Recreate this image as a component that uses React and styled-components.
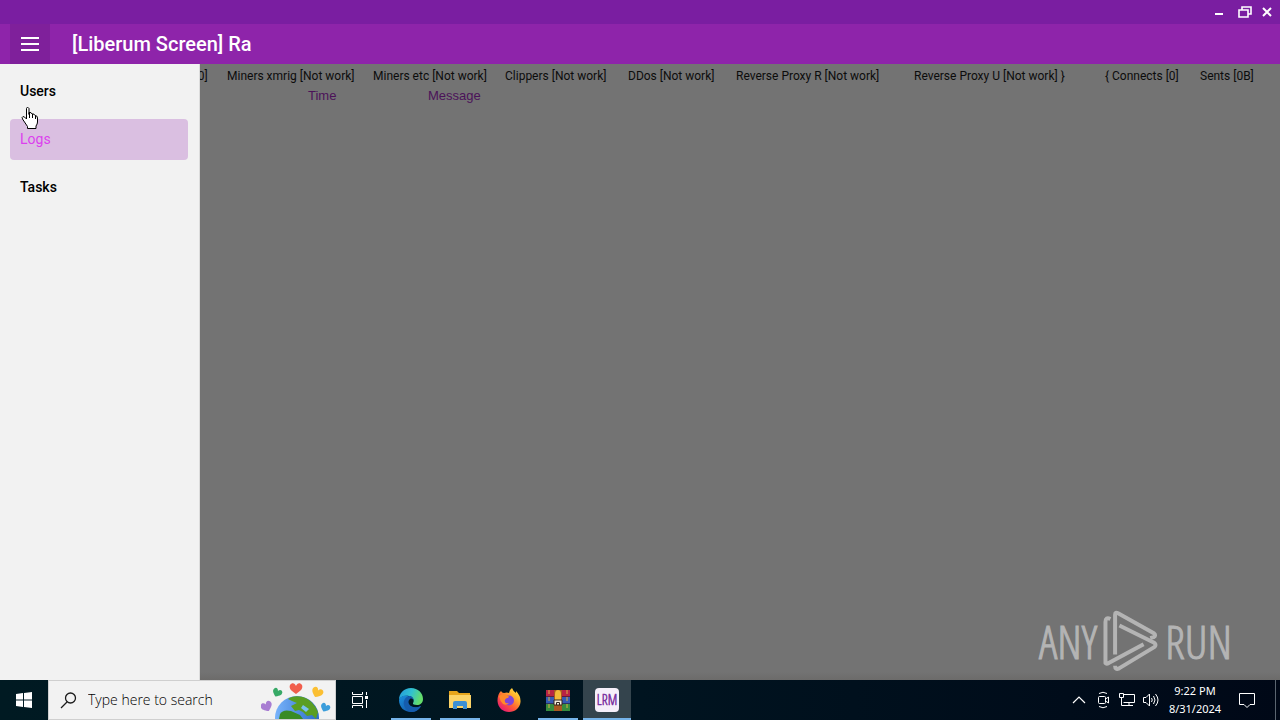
import React from 'react';
import styled, { createGlobalStyle } from 'styled-components';

const GlobalStyle = createGlobalStyle`
    * {
        box-sizing: border-box;
    }

    body {
        margin: 0;
        overflow: hidden;
        font-family: Roboto, 'Liberation Sans', sans-serif;
    }

    button {
        border: 0;
        padding: 0;
        background: none;
        font: inherit;
        color: inherit;
    }
`;

const Desktop = styled.div`
    display: flex;
    flex-direction: column;
    min-height: 100vh;
`;

const TitleBar = styled.header`
    display: flex;
    justify-content: flex-end;
    height: 24px;
    padding-right: 1px;
    background-color: #7a1ea1;
    color: white;
`;

const WindowButton = styled.button`
    display: flex;
    align-items: center;
    justify-content: center;
    width: ${(props) => props.$width || 24}px;
    height: 24px;
`;

const AppBar = styled.div`
    display: flex;
    align-items: center;
    gap: 22px;
    height: 40px;
    padding-left: 10px;
    background-color: #8e24aa;
    color: white;
`;

const MenuButton = styled.button`
    display: flex;
    align-items: center;
    justify-content: center;
    width: 40px;
    height: 40px;
    background-color: #7f209b;
`;

const Title = styled.h1`
    margin: 0;
    font-size: 20px;
    line-height: 24px;
    font-weight: 500;
`;

const Workspace = styled.main`
    position: relative;
    flex: 1;
    display: flex;
    flex-direction: column;
    overflow: hidden;
    background: linear-gradient(0deg, #6c6b6a, #737373 8px);
`;

const Drawer = styled.nav`
    position: absolute;
    top: 0;
    left: 0;
    bottom: 0;
    width: 200px;
    padding: 7px 11px 0 10px;
    display: flex;
    flex-direction: column;
    gap: 7px;
    background-color: #f2f2f2;
    border-right: 1px solid #dcdcdc;
`;

const DrawerItem = styled.a`
    height: 41px;
    padding-left: 10px;
    border-radius: 4px;
    font-size: 14px;
    line-height: 41px;
    font-weight: ${(props) => (props.$active ? 400 : 500)};
    text-decoration: none;
    color: ${(props) => (props.$active ? '#dc3fee' : 'black')};
    background-color: ${(props) => (props.$active ? '#dabfe1' : 'transparent')};
`;

const StatusBar = styled.div`
    display: flex;
    justify-content: flex-end;
    height: 24px;
    padding-right: 22px;
    font-size: 12px;
    line-height: 24px;
    white-space: nowrap;
    color: #0c0c0c;
`;

const Status = styled.span`
    flex: none;
    width: ${(props) => props.$width}px;
`;

const LogTable = styled.table`
    align-self: flex-start;
    margin-left: 308px;
    border-collapse: collapse;
    font-family: 'Liberation Sans', sans-serif;
    font-size: 13px;
    line-height: 16px;
    color: #4b1259;

    & th {
        width: 120px;
        padding: 0;
        text-align: left;
        font-weight: 400;
    }
`;

const Pointer = styled.svg`
    position: absolute;
    top: 42px;
    left: 21px;
`;

const Watermark = styled.div`
    position: absolute;
    right: 48px;
    bottom: 6px;
    display: flex;
    align-items: center;
    gap: 6px;
    height: 66px;
    font-family: 'Open Sans Condensed Light', 'Open Sans Condensed', 'Liberation Sans Narrow', 'Liberation Sans', sans-serif;
    font-size: 46px;
    line-height: 48px;
    font-weight: 300;
    color: #b4b4b4;
    -webkit-text-stroke: 1px #b4b4b4;
`;

const Taskbar = styled.footer`
    display: flex;
    height: 40px;
    background: linear-gradient(90deg, #001a22, #001420 50%, #000817);
    color: white;
`;

const StartButton = styled.button`
    display: flex;
    align-items: center;
    justify-content: center;
    width: 48px;
    height: 40px;
`;

const SearchBox = styled.label`
    display: flex;
    align-items: center;
    width: 288px;
    padding-left: 11px;
    gap: 11px;
    border: 1px solid #cfcfcf;
    background-color: #f2f2f2;
    color: #1b1b1b;

    & svg {
        flex: none;
    }
`;

const SearchInput = styled.input`
    flex: 1;
    min-width: 0;
    padding: 0;
    border: 0;
    outline: 0;
    background: none;
    font-family: 'Open Sans', sans-serif;
    font-size: 14px;
    line-height: 20px;
    font-weight: 300;

    &::placeholder {
        color: #000000;
        opacity: 1;
    }
`;

const Apps = styled.div`
    display: flex;
    gap: 1px;
    margin-left: 3px;
`;

const AppButton = styled.button`
    display: flex;
    align-items: center;
    justify-content: center;
    position: relative;
    width: 48px;
    height: 40px;
    background-color: ${(props) => (props.$focused ? '#34444d' : 'transparent')};

    &::after {
        content: '';
        position: absolute;
        bottom: 0;
        left: ${(props) => (props.$focused ? 0 : 4)}px;
        right: ${(props) => (props.$focused ? 0 : 4)}px;
        height: 2px;
        background-color: ${(props) => (props.$open ? '#76b4ea' : 'transparent')};
    }
`;

const Tray = styled.div`
    display: flex;
    align-items: center;
    margin-left: auto;
`;

const TrayButton = styled.button`
    display: flex;
    align-items: center;
    justify-content: center;
    width: ${(props) => props.$width || 24}px;
    height: 40px;
`;

const Clock = styled.time`
    width: 64px;
    text-align: center;
    font-family: 'Noto Sans', sans-serif;
    font-size: 11px;
    line-height: 18px;
`;

const ShowDesktop = styled.button`
    width: 5px;
    height: 40px;
    margin-left: 8px;
    border-left: 1px solid #5b6570;
`;

const PointerHand = () => (
    <Pointer width="18" height="24" viewBox="0 0 18 24" aria-hidden="true">
        <path
            d="M5.5 13V2.500Q5.500 1.500 6.500 1.500T8 2.500V8.500V6.500Q10.500 6 11 8V8Q13.500 7.500 14 9.500V9.500Q16.500 9.500 16.500 12V16Q16.500 18 15 20V22.500H6.500V20.500L3.500 16L1.500 13Q.5 11 2 10.500Q3.500 10.500 5.500 13Z"
            fill="white"
            stroke="black"
        />
        <path d="M8.500 7V12M11.500 8V12M14.500 10V13" stroke="black" />
    </Pointer>
);

const PlayLogo = () => (
    <svg width="56" height="62" viewBox="270 28 168 187" aria-hidden="true">
        <g
            fill="none"
            stroke="#b4b4b4"
            strokeWidth="12"
            strokeLinejoin="round"
        >
            <path d="M292 55Q277 48 277 64V188Q280 192 288 187L392 131" />
            <path d="M306 162V42Q306 33 315 38L423 98Q431 105 422 110L412 113" />
            <path d="M319 75L424 127Q432 134 424 140L318 204Q306 210 306 196" />
        </g>
    </svg>
);

const EdgeIcon = () => (
    <svg width="24" height="24" viewBox="0 0 24 24">
        <defs>
            <linearGradient id="edgeTop" x1="0" y1="0" x2="1" y2="0.3">
                <stop offset="0" stopColor="#2398dc" />
                <stop offset="0.55" stopColor="#31c1d0" />
                <stop offset="1" stopColor="#64dd6b" />
            </linearGradient>
            <linearGradient id="edgeLow" x1="0" y1="0" x2="1" y2="1">
                <stop offset="0" stopColor="#1a8fdd" />
                <stop offset="1" stopColor="#124a9c" />
            </linearGradient>
        </defs>
        <path
            d="M0 12C0 5 5 0 12 0S24 5 24 11C24 15 21 17 18 17C15 17 13.500 16 14 15C15.500 13 15 9 10 8C5 7 1 9 0 12Z"
            fill="url(#edgeTop)"
        />
        <path
            d="M0 12C1 8 6 6.500 10 8C7.500 9 7 13 9 16C12 20 18 20 22 18C20 22 16 24 12 24C5 24 0 19 0 12Z"
            fill="url(#edgeLow)"
        />
        <path
            d="M10 8C6 9 4 13 5 17C6 21 9 24 13 24C17 24 20 21 22 18C17 20.500 12 19.500 10 16C9 14 9.500 12 11 11C12.500 10 14.500 11 14.500 13C15 10 13 8 10 8Z"
            fill="#155cad"
        />
    </svg>
);

const ExplorerIcon = () => (
    <svg width="22" height="20" viewBox="0 0 22 20">
        <path d="M0 1H8L10 3H21V8H0Z" fill="#e6a51c" />
        <path d="M0 5H22V18H0Z" fill="#fbd367" />
        <path
            d="M4 19V13Q4 11 6 11H16Q18 11 18 13V19H14V16H8V19Z"
            fill="#3b8fd3"
        />
        <path d="M8 16H14V18H8Z" fill="#fbd367" />
    </svg>
);

const FirefoxIcon = () => (
    <svg width="24" height="24" viewBox="0 0 24 24">
        <defs>
            <linearGradient id="foxFire" x1="1" y1="0" x2="0.2" y2="1">
                <stop offset="0" stopColor="#fff04a" />
                <stop offset="0.35" stopColor="#ffb02d" />
                <stop offset="0.65" stopColor="#ff5a36" />
                <stop offset="1" stopColor="#e6127b" />
            </linearGradient>
        </defs>
        <path
            d="M4 3Q5 5 7 5Q10 4 12 5Q12 2 15 0Q16 3 19 5V3Q24 8 23.500 14C23 20 18 24 12 24S1 20 .5 13Q.5 6 4 3Z"
            fill="url(#foxFire)"
        />
        <circle cx="12" cy="12.500" r="5" fill="#8044d8" />
        <path
            d="M2 8Q5 5 9 7L12 8.500Q12 10 9 10.500Q7 12 8 14Q9 16 12 15Q10 18 6 16Q3 13 2 8Z"
            fill="#ff8a2a"
        />
    </svg>
);

const WinrarIcon = () => (
    <svg width="24" height="23" viewBox="0 0 24 23">
        <path d="M0 1H24V8H0Z" fill="#b72345" />
        <path d="M0 8H24V15H0Z" fill="#345ab4" />
        <path d="M0 15H24V22H0Z" fill="#368c3f" />
        <path d="M0 7.500H24M0 14.500H24" stroke="#2a1a30" opacity="0.6" />
        <path d="M3 1V22M21 1V22" stroke="#d9b342" strokeDasharray="4 3" />
        <path d="M8 1H16V22H8Z" fill="#a85822" />
        <path d="M9 5Q9 1 12 1T15 5V11H9Z" fill="#f1b83a" />
        <path d="M8 11H16V16H8Z" fill="#f6eedb" stroke="#33251e" />
        <path d="M10.500 16V13.500H13.500V16" fill="none" stroke="#33251e" />
    </svg>
);

const LrmIcon = () => (
    <svg width="24" height="24" viewBox="0 0 24 24">
        <rect width="24" height="24" rx="4" fill="#f5effa" />
        <text
            x="12"
            y="17"
            textAnchor="middle"
            fontFamily="Open Sans Condensed Light, Liberation Sans Narrow, Liberation Sans, sans-serif"
            fontSize="14"
            fill="#7930a0"
            stroke="#7930a0"
            strokeWidth="0.5"
        >
            LRM
        </text>
    </svg>
);

const EarthDoodle = () => (
    <svg width="74" height="38" viewBox="0 0 74 38" aria-hidden="true">
        <defs>
            <linearGradient id="ocean">
                <stop offset="0" stopColor="#78b3fa" />
                <stop offset="1" stopColor="#2a6cc9" />
            </linearGradient>
            <path
                id="heart"
                d="M0 5C-6 1-7-1-6-4C-4-7-1-6 0-3C1-6 4-7 6-4C7-1 6 1 0 5Z"
            />
        </defs>
        <circle cx="36" cy="37" r="22" fill="url(#ocean)" />
        <path
            d="M27 18Q32 14 42 16Q52 19 57 31L55 38L51 34L46 35L42 31L38 29L34 30L30 25L36 22L31 20Z"
            fill="#5a9e22"
        />
        <path d="M19 33Q22 28 30 30L39 34L42 38H18Z" fill="#398b25" />
        <path d="M42 24L48 28L45 31L40 27Z" fill="#79c2ed" />
        <use href="#heart" transform="translate(35 8)" fill="#f15e4c" />
        <use
            href="#heart"
            transform="translate(16 12) rotate(25) scale(.75)"
            fill="#37a966"
        />
        <use
            href="#heart"
            transform="translate(56 12) rotate(25) scale(.9)"
            fill="#fbbf32"
        />
        <use
            href="#heart"
            transform="translate(6 26) rotate(-25) scale(.9)"
            fill="#a87dd2"
        />
        <use
            href="#heart"
            transform="translate(64 27) rotate(25) scale(.75)"
            fill="#3b9ddb"
        />
    </svg>
);

const statuses = [
    { label: 'Stealers [0]', width: 79 },
    { label: 'Miners xmrig [Not work]', width: 146 },
    { label: 'Miners etc [Not work]', width: 132 },
    { label: 'Clippers [Not work]', width: 123 },
    { label: 'DDos [Not work]', width: 108 },
    { label: 'Reverse Proxy R [Not work]', width: 178 },
    { label: 'Reverse Proxy U [Not work] }', width: 191 },
    { label: '{ Connects [0]', width: 95 },
    { label: 'Sents [0B]', width: 58 },
];

const sections = ['Users', 'Logs', 'Tasks'];

const apps = [
    { name: 'Microsoft Edge', icon: <EdgeIcon />, open: true },
    { name: 'File Explorer', icon: <ExplorerIcon />, open: true },
    { name: 'Firefox', icon: <FirefoxIcon /> },
    { name: 'WinRAR', icon: <WinrarIcon />, open: true },
    { name: 'Liberum', icon: <LrmIcon />, open: true, focused: true },
];

const WindowControls = () => (
    <TitleBar>
        <WindowButton $width={32} aria-label="Minimize">
            <svg width="14" height="14" viewBox="0 0 14 14">
                <path d="M3 9H11" stroke="white" strokeWidth="2" />
            </svg>
        </WindowButton>
        <WindowButton $width={20} aria-label="Restore">
            <svg width="14" height="12" viewBox="0 0 14 12">
                <path
                    d="M4 4V1H13V8H10M1 4H10V11H1Z"
                    fill="none"
                    stroke="white"
                    strokeWidth="1.600"
                />
            </svg>
        </WindowButton>
        <WindowButton aria-label="Close">
            <svg width="10" height="10" viewBox="0 0 10 10">
                <path d="M1 1L9 9M9 1L1 9" stroke="white" strokeWidth="2" />
            </svg>
        </WindowButton>
    </TitleBar>
);

const SystemTray = () => (
    <Tray>
        <TrayButton aria-label="Show hidden icons">
            <svg width="14" height="8" viewBox="0 0 14 8">
                <path
                    d="M1 7L7 1L13 7"
                    fill="none"
                    stroke="white"
                    strokeWidth="1.200"
                />
            </svg>
        </TrayButton>
        <TrayButton aria-label="Meet now">
            <svg width="14" height="18" viewBox="0 0 14 18">
                <g fill="none" stroke="white">
                    <rect x="2.500" y="5.500" width="7" height="7" rx="1" />
                    <path d="M9.500 8L12.500 6V12L9.500 10M3 2.500Q7 0 11 2.500M3 15.500Q7 18 11 15.500" />
                </g>
            </svg>
        </TrayButton>
        <TrayButton aria-label="Network">
            <svg width="18" height="16" viewBox="0 0 18 16">
                <path
                    d="M5.500 2.500H16.500V10.500H5.500M11 10.500V13.500M7 13.500H15M1.500 1.500H5.500V5.500H1.500ZM3.500 5.500V13.500H7"
                    fill="none"
                    stroke="white"
                />
            </svg>
        </TrayButton>
        <TrayButton aria-label="Volume">
            <svg width="18" height="16" viewBox="0 0 18 16">
                <path
                    d="M1.500 5.500H4L7.500 2V14L4 10.500H1.500ZM9.500 6Q11 8 9.500 10M11.500 4Q14.500 8 11.500 12M13.500 2Q18.500 8 13.500 14"
                    fill="none"
                    stroke="white"
                />
            </svg>
        </TrayButton>
        <Clock>
            9:22 PM
            <br />
            8/31/2024
        </Clock>
        <TrayButton $width={40} aria-label="Notifications">
            <svg width="18" height="18" viewBox="0 0 18 18">
                <path
                    d="M1.500 2.500H16.500V13.500H12L9 16.500L6 13.500H1.500Z"
                    fill="none"
                    stroke="white"
                />
            </svg>
        </TrayButton>
        <ShowDesktop aria-label="Show desktop" />
    </Tray>
);

const App = () => (
    <Desktop>
        <GlobalStyle />
        <WindowControls />
        <AppBar>
            <MenuButton aria-label="Menu">
                <svg width="18" height="14" viewBox="0 0 18 14">
                    <path d="M0 1H18M0 7H18M0 13H18" stroke="white" strokeWidth="2" />
                </svg>
            </MenuButton>
            <Title>[Liberum Screen] Ra</Title>
        </AppBar>
        <Workspace>
            <StatusBar>
                {statuses.map(({ label, width }) => (
                    <Status key={label} $width={width}>
                        {label}
                    </Status>
                ))}
            </StatusBar>
            <LogTable>
                <thead>
                    <tr>
                        <th>Time</th>
                        <th>Message</th>
                    </tr>
                </thead>
            </LogTable>
            <Drawer>
                {sections.map((name) => (
                    <DrawerItem key={name} href="#" $active={name === 'Logs'}>
                        {name}
                    </DrawerItem>
                ))}
            </Drawer>
            <PointerHand />
            <Watermark>
                ANY
                <PlayLogo />
                RUN
            </Watermark>
        </Workspace>
        <Taskbar>
            <StartButton aria-label="Start">
                <svg width="16" height="16" viewBox="0 0 16 16">
                    <path
                        d="M0 2L7 1V7.500H0ZM8 1L16 0V7.500H8ZM0 8.500H7V15L0 14ZM8 8.500H16V16L8 15Z"
                        fill="white"
                    />
                </svg>
            </StartButton>
            <SearchBox>
                <svg width="17" height="17" viewBox="0 0 17 17">
                    <g fill="none" stroke="#1b1b1b" strokeWidth="1.300">
                        <circle cx="10.500" cy="6" r="5" />
                        <path d="M7 10L1 16" />
                    </g>
                </svg>
                <SearchInput
                    type="text"
                    aria-label="Search"
                    placeholder="Type here to search"
                />
                <EarthDoodle />
            </SearchBox>
            <AppButton aria-label="Task view">
                <svg width="18" height="16" viewBox="0 0 18 16">
                    <g fill="none" stroke="white">
                        <path d="M1.500 0V2.500H11.500V0M1.500 16V13.500H11.500V16M1.500 4.500H11.500V11.500H1.500ZM15.500 0V3M15.500 8V16" />
                        <path d="M14 5.500H17" strokeWidth="3" />
                    </g>
                </svg>
            </AppButton>
            <Apps>
                {apps.map(({ name, icon, open, focused }) => (
                    <AppButton
                        key={name}
                        aria-label={name}
                        $open={open}
                        $focused={focused}
                    >
                        {icon}
                    </AppButton>
                ))}
            </Apps>
            <SystemTray />
        </Taskbar>
    </Desktop>
);

export default App;
